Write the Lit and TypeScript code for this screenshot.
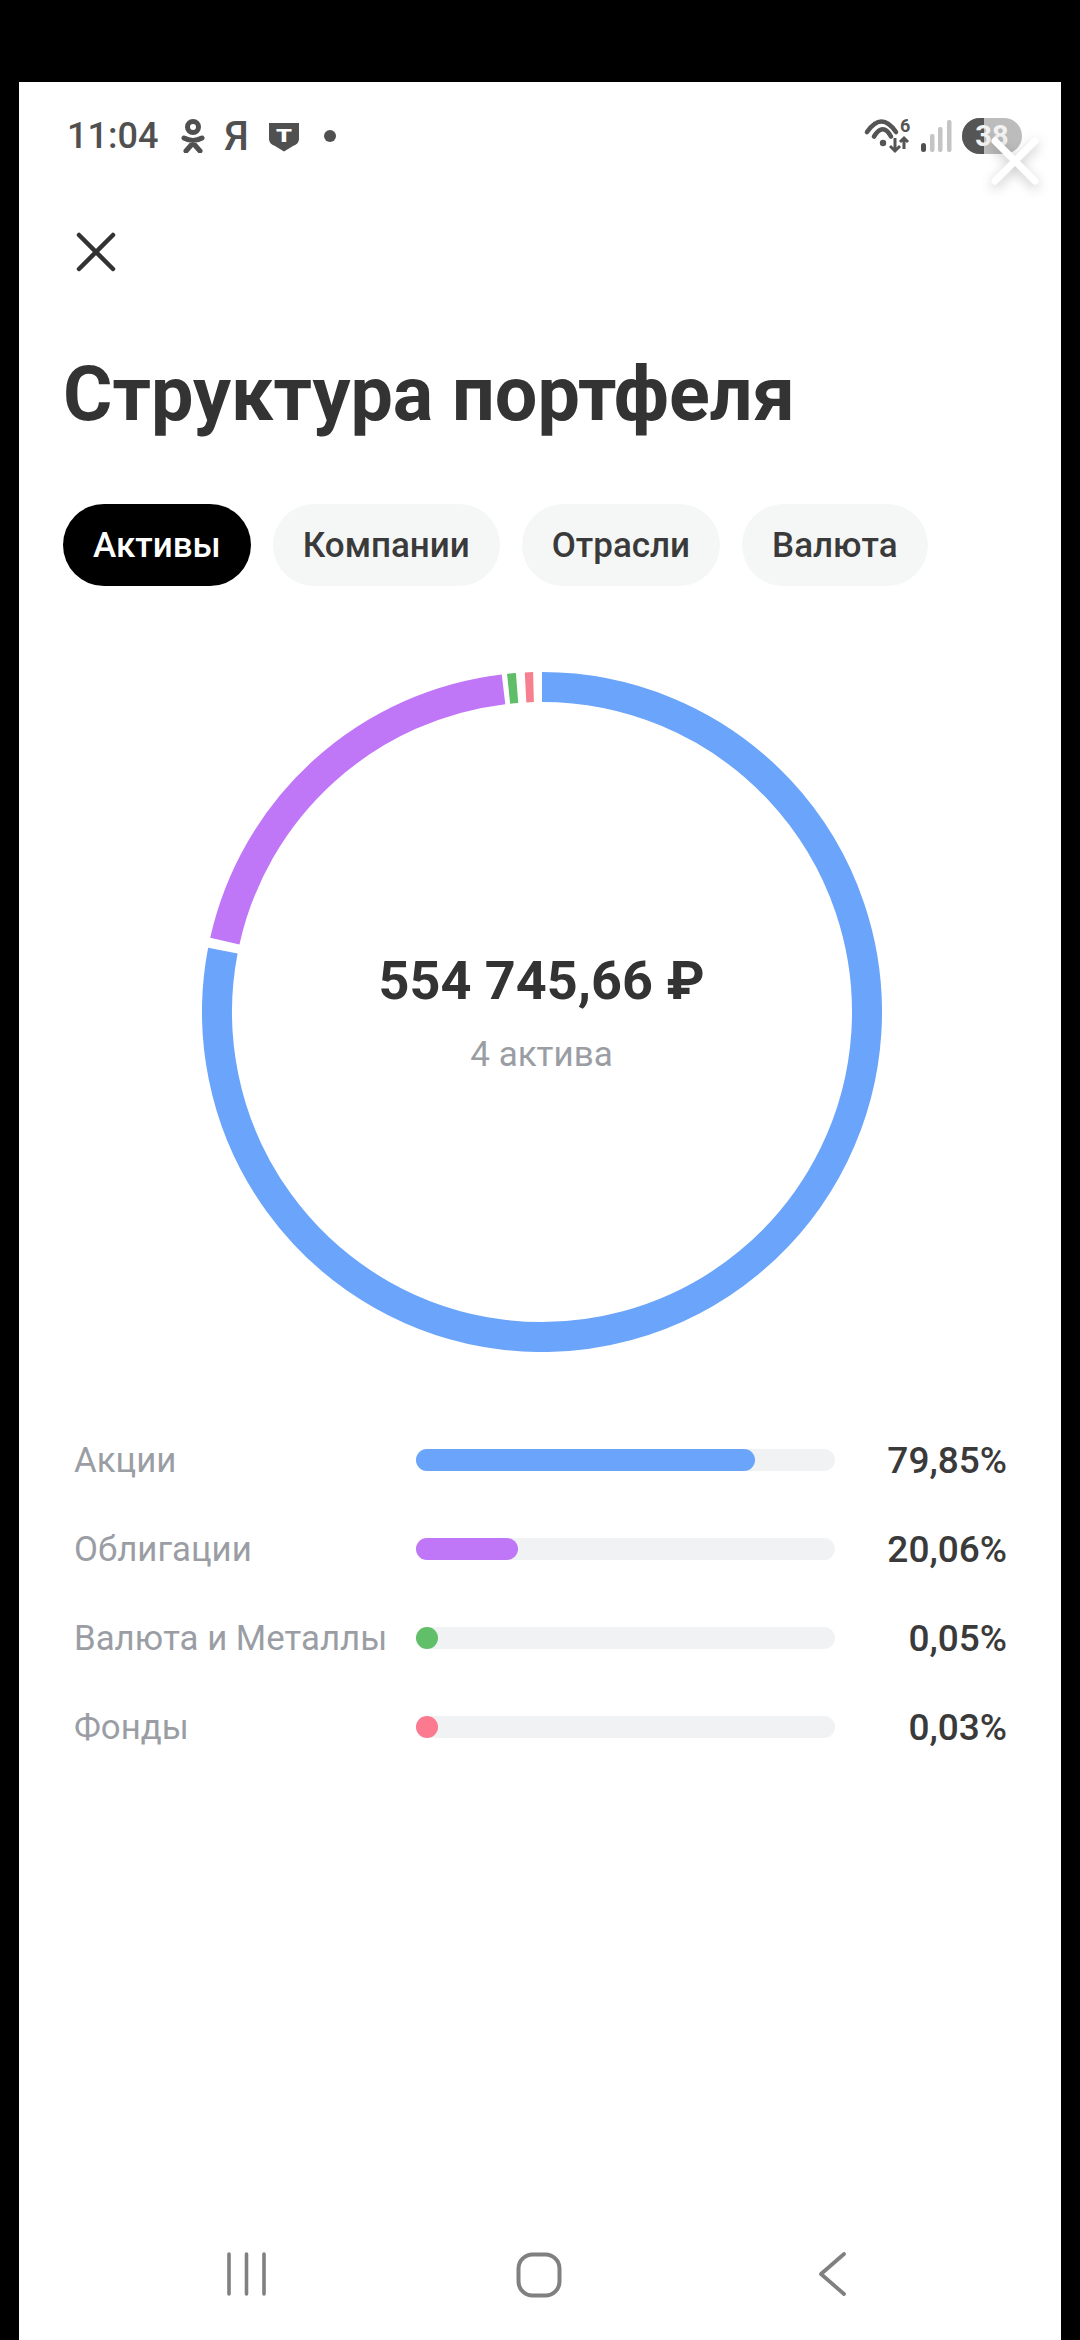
import { LitElement, html, css, svg } from "lit";
import { customElement } from "lit/decorators.js";

const R = 325;
const C = 340;
function arc(a0: number, a1: number, color: string) {
  const p = (a: number) => {
    const t = ((a - 90) * Math.PI) / 180;
    return `${C + R * Math.cos(t)} ${C + R * Math.sin(t)}`;
  };
  const large = a1 - a0 > 180 ? 1 : 0;
  return svg`<path class="seg" d="M${p(a0)} A${R} ${R} 0 ${large} 1 ${p(a1)}" stroke=${color}></path>`;
}
const SEGMENTS: [number, number, string][] = [
  [0, 280.9, "#6ba4fb"],
  [282.6, 353.2, "#c077f7"],
  [354.1, 355.6, "#60bd68"],
  [357.1, 358.5, "#f67f90"],
];
const ROWS = [
  { label: "Акции", w: 339, color: "#6ba4fb", value: "79,85%" },
  { label: "Облигации", w: 102, color: "#c077f7", value: "20,06%" },
  { label: "Валюта и Металлы", w: 22, color: "#60bf68", value: "0,05%" },
  { label: "Фонды", w: 22, color: "#fb7a90", value: "0,03%" },
];
const TABS = ["Активы", "Компании", "Отрасли", "Валюта"];

@customElement("app-root")
export class AppRoot extends LitElement {
  static styles = css`
    :host { display: block; width: 1080px; height: 2340px; background: #000; padding: 82px 19px 0; box-sizing: border-box; font-family: Roboto, "Noto Sans", sans-serif; color: #333; }
    .frame { position: relative; height: 2258px; background: #fff; display: flex; flex-direction: column; }
    .status { display: flex; align-items: center; height: 40px; margin-top: 34px; padding: 0 39px 0 48px; color: #505050; }
    .time { font-size: 36px; font-weight: 500; width: 114px; }
    .ya { font-size: 40px; font-weight: 500; width: 41px; margin-left: 11px; text-align: center; }
    .dot { width: 12px; height: 12px; border-radius: 50%; background: #505050; margin-left: 24px; }
    .shield { margin: 2px 0 0 11px; }
    .spacer { flex: 1; }
    .wifi { margin-right: 8px; overflow: visible; }
    .sig { margin-right: 10px; }
    .batt { position: relative; width: 60px; height: 36px; border-radius: 18px; overflow: hidden; background: #bcbcbc; display: flex; align-items: center; justify-content: center; color: #f2f2f2; font-size: 29px; font-weight: 700; }
    .batt::before { content: ""; position: absolute; inset: 0 38px 0 0; background: #555; }
    .batt span { position: relative; }
    .overlay-x { position: absolute; left: 971px; top: 54px; filter: drop-shadow(0 4px 6px rgba(0,0,0,.22)); }
    .close { margin: 76px 0 0 57px; width: 40px; height: 40px; display: block; }
    h1 { margin: 74px 0 0 44px; font-size: 75.5px; line-height: 96px; font-weight: 700; color: #333; }
    .tabs { display: flex; gap: 22px; margin: 62px 0 0 44px; }
    .tab { height: 82px; padding: 0 30px; border-radius: 41px; background: #f5f7f7; display: flex; align-items: center; font-size: 35px; font-weight: 500; color: #3a3a3a; }
    .tab.on { background: #000; color: #fff; }
    .chart { display: grid; justify-items: center; align-items: center; margin: 86px 0 0 3px; }
    .chart > * { grid-area: 1 / 1; }
    .chart svg { width: 680px; height: 680px; display: block; }
    .seg { fill: none; stroke-width: 30; }
    .center { text-align: center; }
    .sum { font-size: 54px; line-height: 64px; font-weight: 700; color: #333; }
    .sub { font-size: 35px; line-height: 40px; margin-top: 22px; color: #9a9ea4; }
    .list { margin: 84px 0 0 55px; display: flex; flex-direction: column; gap: 41px; }
    .row { display: grid; grid-template-columns: 342px 419px 172px; align-items: center; height: 48px; }
    .label { font-size: 34.8px; color: #9a9ea4; white-space: nowrap; }
    .track { height: 22px; border-radius: 11px; background: #f0f2f3; }
    .fill { height: 22px; border-radius: 11px; }
    .val { text-align: right; font-size: 37px; font-weight: 500; color: #3a3a3a; }
    .nav { margin-top: auto; height: 46px; padding: 0 214px 42px 207px; display: flex; justify-content: space-between; }
    .nav svg { display: block; }
    .home { margin-right: 5px; }
  `;

  render() {
    return html`<div class="frame">
      <div class="status">
        <span class="time">11:04</span>
        <svg width="24" height="34" viewBox="0 0 24 34"><g fill="none" stroke="#505050" stroke-width="5" stroke-linecap="round"><circle cx="12" cy="8" r="5.5"></circle><path d="M3 19 Q12 24 21 19M12 22V24M12 24 L5 32M12 24 L19 32"></path></g></svg>
        <span class="ya">Я</span>
        <svg class="shield" width="32" height="30" viewBox="0 0 32 30"><path d="M1 1H31V17Q31 22 25 24L16 29.5L7 24Q1 22 1 17Z" fill="#505050"></path><text x="16" y="19.5" text-anchor="middle" font-size="18" font-weight="900" fill="#fff" font-family="Roboto" textLength="16" lengthAdjust="spacingAndGlyphs">T</text></svg>
        <span class="dot"></span>
        <span class="spacer"></span>
        <svg class="wifi" width="52" height="42" viewBox="0 -2 52 42">
          <g fill="none" stroke="#555" stroke-width="4.6" stroke-linecap="round"><path d="M7 15Q21.5 -6 36 15"></path><path d="M14 19.5Q23 5 31 19.5"></path></g>
          <circle cx="23" cy="26" r="3.2" fill="#555"></circle>
          <text x="40" y="15" font-size="18" font-weight="700" fill="#555" font-family="Roboto">6</text>
          <g fill="none" stroke="#555" stroke-width="3"><path d="M35 21V34M30 29L35 34L40 29"></path><path d="M44 32V21M40 25L44 21L48 25"></path></g>
        </svg>
        <svg class="sig" width="32" height="34" viewBox="0 0 32 34"><rect x="1" y="24" width="5" height="9" rx="2.5" fill="#505050"></rect><rect x="10" y="15" width="4.5" height="18" rx="2" fill="#c4c4c4"></rect><rect x="18" y="8" width="4.5" height="25" rx="2" fill="#c4c4c4"></rect><rect x="27" y="1" width="4.5" height="32" rx="2" fill="#c4c4c4"></rect></svg>
        <div class="batt"><span>38</span></div>
      </div>
      <svg class="overlay-x" width="50" height="50" viewBox="0 0 50 50"><path d="M5 5L45 45M45 5L5 45" stroke="#fff" stroke-width="7" stroke-linecap="round"></path></svg>
      <svg class="close" viewBox="0 0 40 40"><path d="M3 3L37 37M37 3L3 37" stroke="#333" stroke-width="4.5" stroke-linecap="round"></path></svg>
      <h1>Структура портфеля</h1>
      <div class="tabs">${TABS.map((t, i) => html`<div class="tab ${i === 0 ? "on" : ""}">${t}</div>`)}</div>
      <div class="chart">
        <svg viewBox="0 0 680 680">${SEGMENTS.map(([a, b, c]) => arc(a, b, c))}</svg>
        <div class="center"><div class="sum">554 745,66 ₽</div><div class="sub">4 актива</div></div>
      </div>
      <div class="list">
        ${ROWS.map((r) => html`<div class="row">
          <span class="label">${r.label}</span>
          <div class="track"><div class="fill" style="width:${r.w}px;background:${r.color}"></div></div>
          <span class="val">${r.value}</span>
        </div>`)}
      </div>
      <div class="nav">
        <svg width="40" height="44" viewBox="0 0 40 44"><path d="M3 2V42M20.5 2V42M38 2V42" stroke="#808080" stroke-width="3.6" stroke-linecap="round"></path></svg>
        <svg class="home" width="46" height="46" viewBox="0 0 46 46"><rect x="2.5" y="2.5" width="41" height="41" rx="14" fill="none" stroke="#808080" stroke-width="4"></rect></svg>
        <svg width="30" height="44" viewBox="0 0 30 44"><path d="M26 2L3 22L26 42" transform="translate(1 0)" fill="none" stroke="#808080" stroke-width="3.8" stroke-linecap="round" stroke-linejoin="round"></path></svg>
      </div>
    </div>`;
  }
}
